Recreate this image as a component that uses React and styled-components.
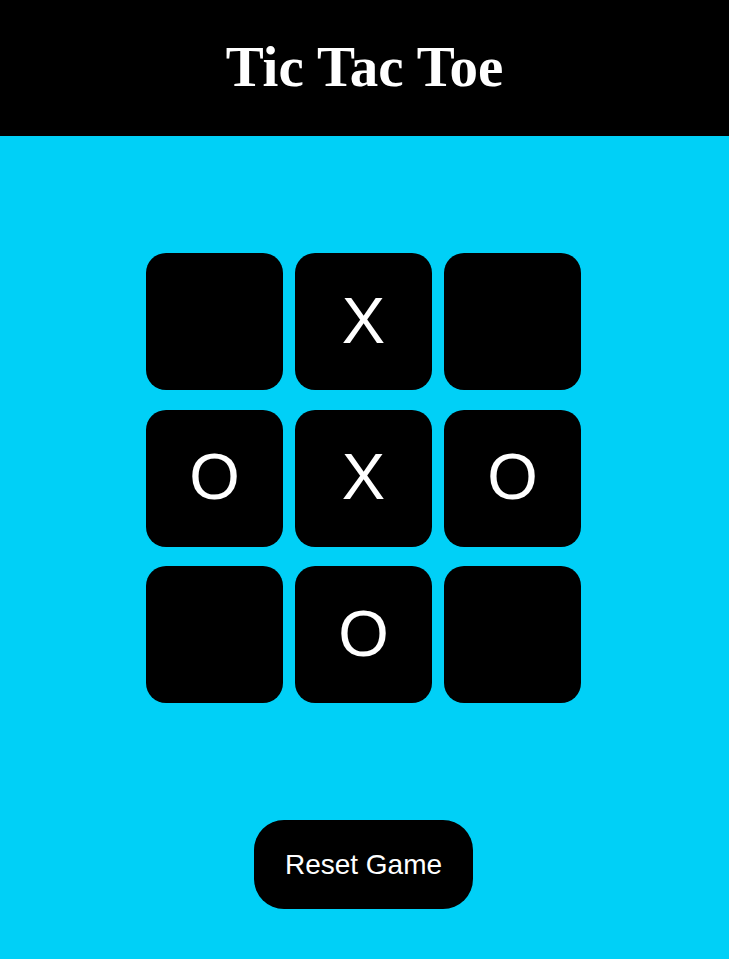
import styled, { createGlobalStyle } from "styled-components";

const GlobalStyle = createGlobalStyle`
    body {
        margin: 0;
        background-color: #00d0f7;
    }
`;

const board = ["", "X", "", "O", "X", "O", "", "O", ""];

export default function App() {
    return (
        <>
            <GlobalStyle />
            <Header>
                <h1>Tic Tac Toe</h1>
            </Header>
            <Main>
                <Board>
                    {board.map((value, i) => (
                        <Cell key={i}>{value}</Cell>
                    ))}
                </Board>
                <ResetButton>Reset Game</ResetButton>
            </Main>
        </>
    );
}

const Header = styled.header`
    height: 136px;
    background-color: #000;
    display: flex;
    justify-content: center;
    align-items: center;

    h1 {
        margin: 0;
        padding-bottom: 4px;
        color: #fff;
        font-family: "Liberation Serif", "Times New Roman", serif;
        font-weight: bold;
        font-size: 57px;
    }
`;

const Main = styled.main`
    display: flex;
    flex-direction: column;
    align-items: center;
    padding: 117px 2px 49px 0;
`;

const Board = styled.div`
    display: grid;
    grid-template-columns: repeat(3, 137px);
    grid-auto-rows: 137px;
    column-gap: 12px;
    row-gap: 19.5px;
`;

const Cell = styled.div`
    background-color: #000;
    border-radius: 20px;
    display: flex;
    justify-content: center;
    align-items: center;
    padding-bottom: 3px;
    color: #fff;
    font-family: "Liberation Sans", Arial, sans-serif;
    font-size: 65px;
`;

const ResetButton = styled.button`
    margin-top: 117px;
    width: 219px;
    height: 89px;
    border: none;
    border-radius: 30px;
    background-color: #000;
    color: #fff;
    font-family: "Liberation Sans", Arial, sans-serif;
    font-size: 28px;
    cursor: pointer;
`;
